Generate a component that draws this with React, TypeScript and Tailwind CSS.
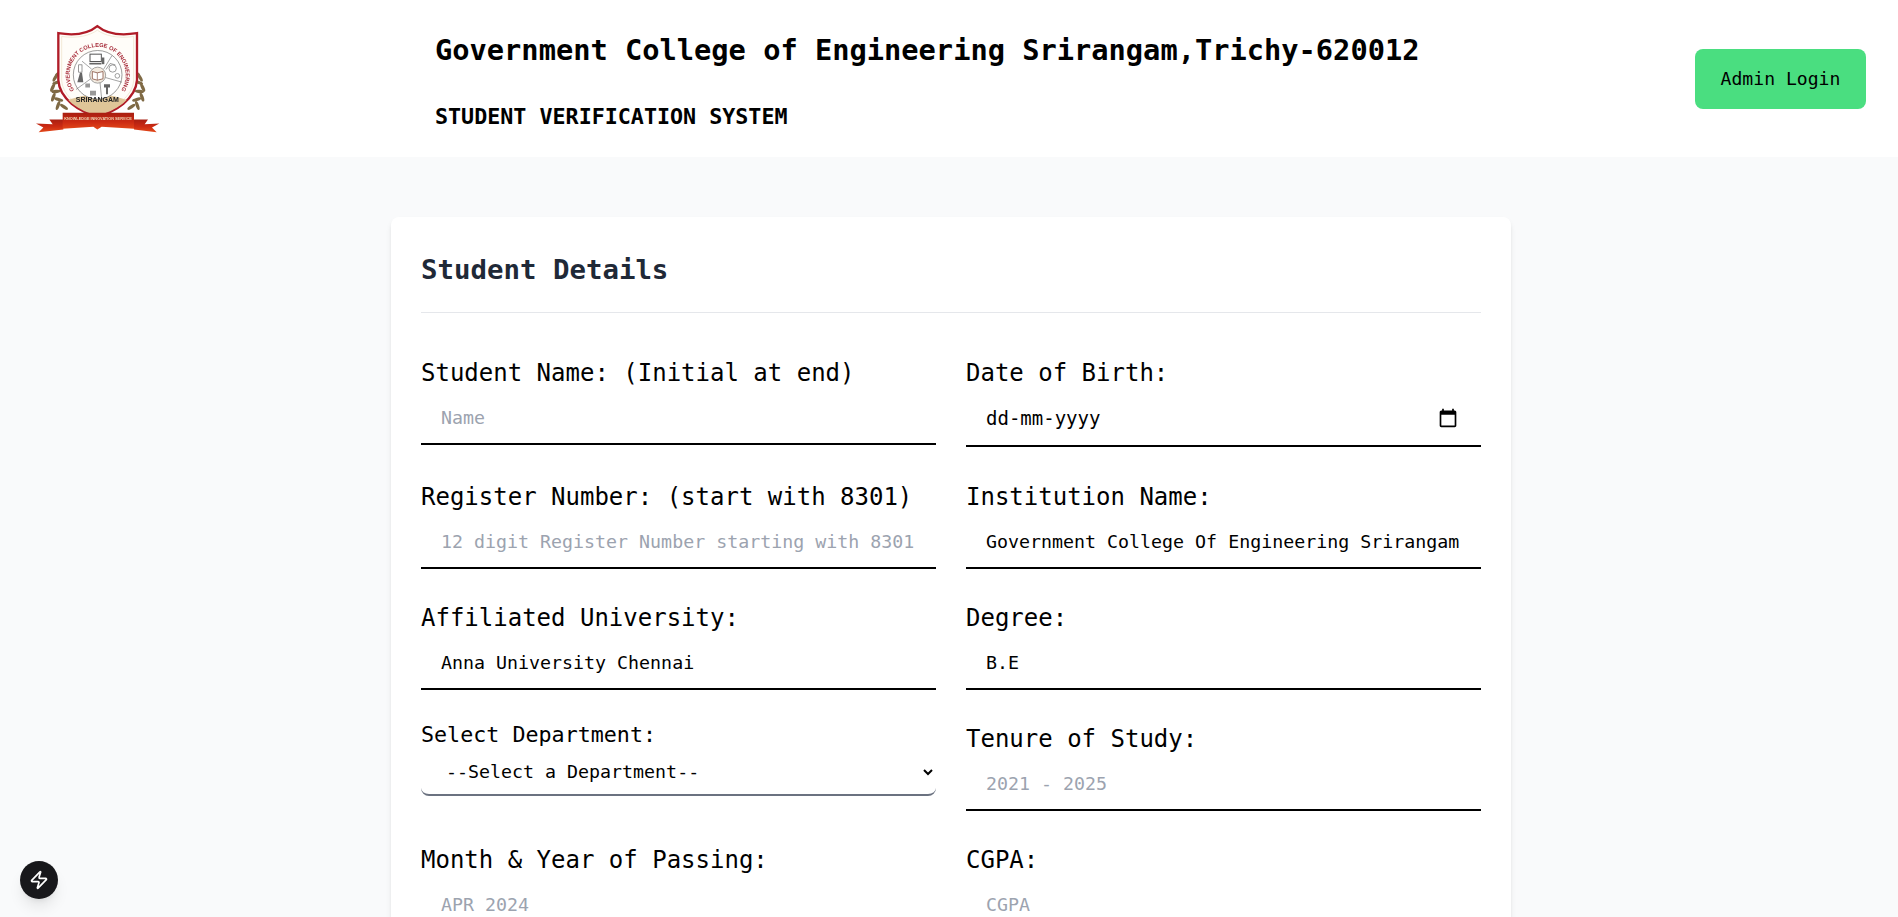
import React from "react";
import { Zap } from "lucide-react";

const leafL = [
  [178, 218, -35], [166, 232, -60], [170, 247, -20], [158, 262, -65], [168, 274, -5], [160, 291, -70], [176, 298, 15], [174, 316, -70], [192, 320, 35],
];

function Logo() {
  return (
    <svg viewBox="108 72 372 326" className="w-[124px] h-[109px] blur-[0.5px] shrink-0">
      <defs>
        <linearGradient id="rib" x1="0" x2="0" y1="0" y2="1">
          <stop offset="0" stopColor="#a81f12" />
          <stop offset="0.55" stopColor="#cc2a12" />
          <stop offset="1" stopColor="#e2491a" />
        </linearGradient>
        <clipPath id="sh">
          <path d="M292 80C268 100 230 110 177 101L177 240C180 295 240 335 292 345C345 335 405 295 409 240L409 101C355 110 316 100 292 80Z" />
        </clipPath>
        <path id="arc" d="M224 272A84 84 0 1 1 362 272" fill="none" />
      </defs>
      {leafL.map(([x, y, r], i) => (
        <g key={i}>
          <ellipse cx={x} cy={y} rx="14" ry="5" fill="#7f6a45" transform={`rotate(${r} ${x} ${y})`} />
          <ellipse cx={586 - x} cy={y} rx="14" ry="5" fill="#7f6a45" transform={`rotate(${-r} ${586 - x} ${y})`} />
        </g>
      ))}
      <path d="M292 78C268 98 230 108 175 99L175 240C178 296 240 337 292 347C345 337 407 296 411 240L411 99C355 108 316 98 292 78Z" fill="#fffdf9" stroke="#b01c28" strokeWidth="7" />
      <path d="M292 90C270 106 232 116 185 109L185 240C188 290 242 326 292 336C343 326 398 290 401 240L401 109C352 116 314 106 292 90Z" fill="none" stroke="#e6d6b8" strokeWidth="1.5" />
      <g clipPath="url(#sh)">
        <path d="M170 350L170 312C220 292 262 282 292 282C325 282 365 292 415 312L415 350Z" fill="#dfc598" />
      </g>
      <circle cx="293" cy="224" r="73" fill="#fff" stroke="#6b6b6b" strokeWidth="2" />
      <g stroke="#777" strokeWidth="2">
        <path d="M275 207L246 183M311 207L336 166M316 232L366 246M300 247L305 296M272 236L228 268" />
      </g>
      <circle cx="293" cy="225" r="24" fill="#f3ebe0" stroke="#777" strokeWidth="2" />
      <path d="M277 214L292 218L309 214L309 236L292 240L277 236Z" fill="#fff" stroke="#8a5a4a" strokeWidth="2.5" />
      <path d="M292 218L292 240" stroke="#8a5a4a" strokeWidth="2" />
      <g fill="#666">
        <rect x="270" y="162" width="34" height="22" fill="#fff" stroke="#555" strokeWidth="3" />
        <rect x="268" y="188" width="36" height="5" />
        <rect x="305" y="172" width="8" height="20" />
        <rect x="236" y="194" width="10" height="22" fill="#fff" stroke="#666" strokeWidth="2" />
        <path d="M232 246L240 218L246 218L250 246Z" />
        <path d="M256 250h14v12h-14zM270 272h18v14h-18z" fill="#999" />
        <path d="M312 252h18v10h-6v20h-6v-20h-6z" />
      </g>
      <g fill="none" stroke="#8a8a8a" strokeWidth="2.5">
        <circle cx="338" cy="205" r="11" />
        <circle cx="352" cy="227" r="7" />
        <path d="M318 208L330 190L346 194" />
      </g>
      <text fontFamily="'Liberation Sans',sans-serif" fontWeight="700" fontSize="17" fill="#a62a38">
        <textPath href="#arc" startOffset="50%" textAnchor="middle">GOVERNMENT COLLEGE OF ENGINEERING</textPath>
      </text>
      <text x="292" y="306" textAnchor="middle" fontFamily="'Liberation Sans',sans-serif" fontWeight="700" fontSize="21" fill="#222">SRIRANGAM</text>
      <path d="M190 358L148 358L158 372L108 370L130 382L116 396L190 388Z" fill="url(#rib)" />
      <path d="M402 358L444 358L434 372L478 370L456 382L470 396L402 388Z" fill="url(#rib)" />
      <path d="M188 338L402 338L402 386L305 380L292 388L280 380L188 386Z" fill="url(#rib)" />
      <text x="294" y="360" textAnchor="middle" fontFamily="'Liberation Sans',sans-serif" fontWeight="700" fontSize="11.5" fill="#f0d8b8">KNOWLEDGE INNOVATION SERVICE</text>
    </svg>
  );
}

const mono = "font-['DejaVu_Sans_Mono',monospace]";

function Label({ children }: { children: React.ReactNode }) {
  return <label className="block text-[24px] leading-[36px] text-black">{children}</label>;
}

function Field({ label, placeholder, value }: { label: string; placeholder?: string; value?: string }) {
  return (
    <div>
      <Label>{label}</Label>
      <input
        readOnly
        placeholder={placeholder}
        defaultValue={value}
        className="block w-full h-[54px] pl-[20px] pr-[21px] border-b-2 border-black bg-white text-[18.3px] text-black outline-none placeholder:text-[#9ca3af]"
      />
    </div>
  );
}

export default function App() {
  return (
    <div className={`h-screen overflow-hidden bg-[#f9fafb] relative ${mono}`}>
      <header className="h-[157px] bg-white flex items-center">
        <div className="w-[435px] pl-9 shrink-0">
          <Logo />
        </div>
        <div className="flex-1 self-start pt-[31px]">
          <h1 className="text-[28.7px] leading-[38px] font-bold text-black">Government College of Engineering Srirangam,Trichy-620012</h1>
          <h2 className="mt-[33px] text-[21.7px] leading-[30px] font-bold text-black">STUDENT VERIFICATION SYSTEM</h2>
        </div>
        <button className="w-[171px] h-[60px] mr-8 rounded-lg bg-[#4ade80] text-[18.1px] text-black">Admin Login</button>
      </header>

      <main className="pt-[60px] pl-[391px]">
        <div className="w-[1120px] rounded-lg bg-white shadow-md p-[30px]">
          <h3 className="mt-[5px] text-[27.4px] leading-[36px] font-bold text-[#1f2937] pb-[24px] border-b border-[#e5e7eb]">Student Details</h3>
          <div className="grid grid-cols-2 gap-x-[30px] gap-y-[31px] mt-[42px] items-start">
            <Field label="Student Name: (Initial at end)" placeholder="Name" />
            <div className="pb-[1px]">
              <Label>Date of Birth:</Label>
              <div className="flex items-center justify-between h-[56px] pl-[20px] pr-[23px] border-b-2 border-black">
                <span className="text-[19px] text-black">dd-mm-yyyy</span>
                <svg viewBox="0 0 24 24" className="w-[20px] h-[20px]" fill="#000">
                  <path d="M20 3h-1V1h-2v2H7V1H5v2H4c-1.1 0-2 .9-2 2v16c0 1.1.9 2 2 2h16c1.1 0 2-.9 2-2V5c0-1.1-.9-2-2-2zm0 18H4V8h16v13z" />
                </svg>
              </div>
            </div>
            <Field label="Register Number: (start with 8301)" placeholder="12 digit Register Number starting with 8301" />
            <Field label="Institution Name:" value="Government College Of Engineering Srirangam, Trichy" />
            <Field label="Affiliated University:" value="Anna University Chennai" />
            <Field label="Degree:" value="B.E" />
            <div>
              <label className="block text-[21.7px] leading-[28px] text-black">Select Department:</label>
              <select className="block w-full h-[47px] pl-[21px] pr-[6px] rounded-lg border-b-2 border-[#6b7280] bg-white text-[18.3px] text-black outline-none">
                <option>--Select a Department--</option>
              </select>
            </div>
            <Field label="Tenure of Study:" placeholder="2021 - 2025" />
            <Field label="Month & Year of Passing:" placeholder="APR 2024" />
            <Field label="CGPA:" placeholder="CGPA" />
          </div>
        </div>
      </main>

      <div className="absolute left-[20px] bottom-[18px] w-[38px] h-[38px] rounded-full bg-[#18181b] shadow-lg flex items-center justify-center">
        <Zap size={20} strokeWidth={2} className="text-white" />
      </div>
    </div>
  );
}
